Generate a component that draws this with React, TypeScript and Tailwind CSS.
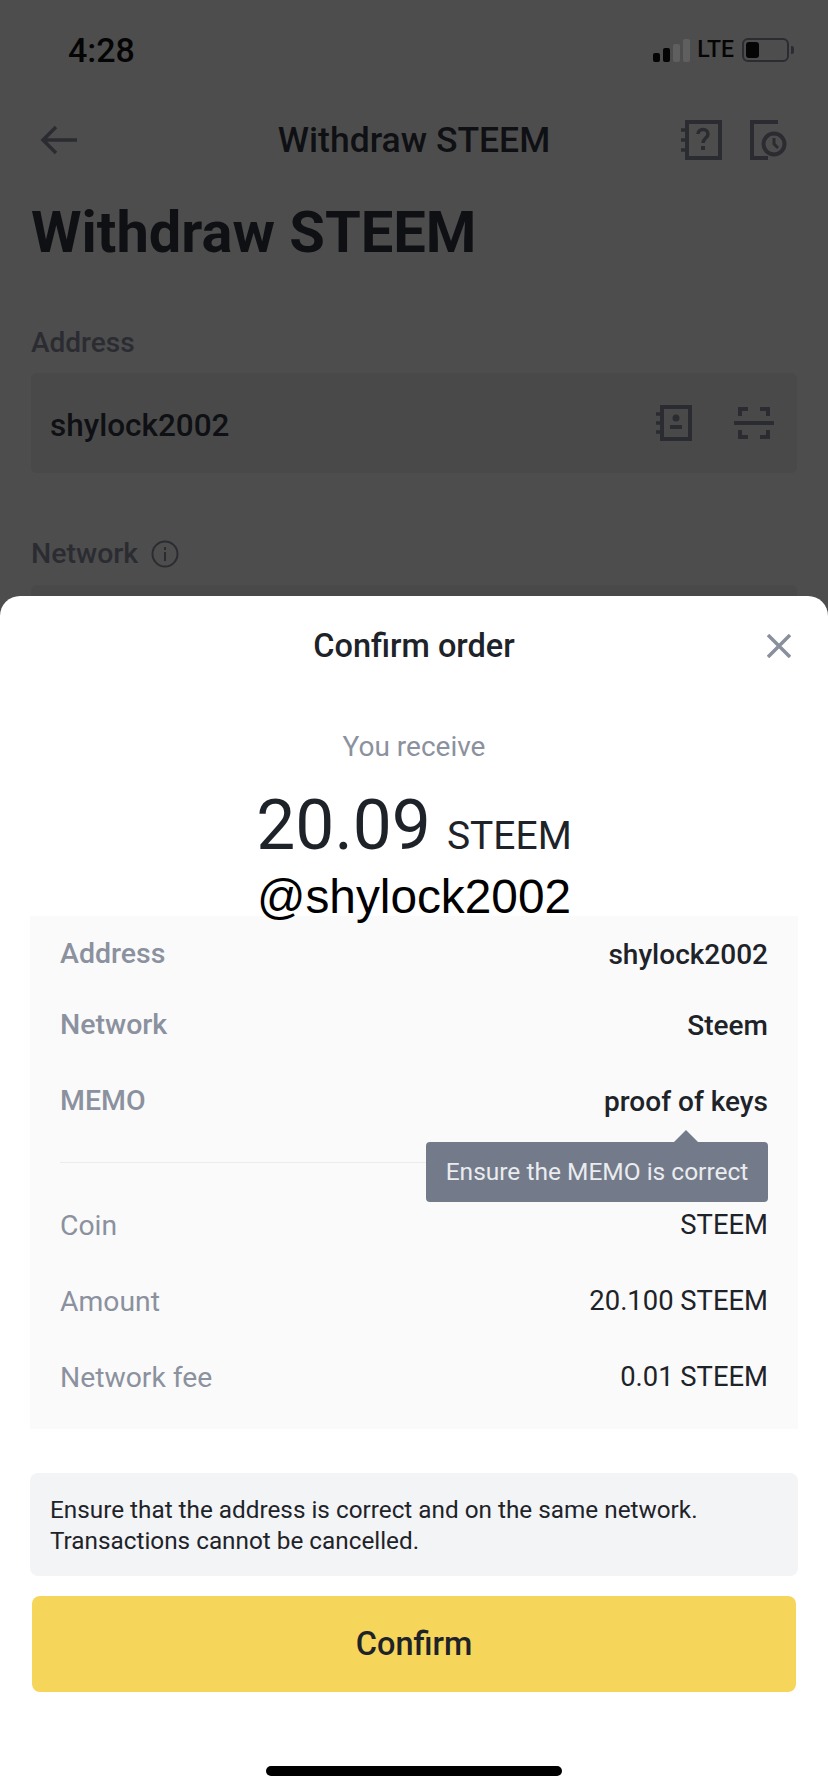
const sans = { fontFamily: "Roboto, 'Noto Sans', sans-serif" };

const details = [
  { label: "Address", value: "shylock2002", h: "h-[74px]" },
  { label: "Network", value: "Steem", h: "h-[68px]" },
  { label: "MEMO", value: "proof of keys", h: "h-[84px]" },
];

const amounts = [
  { label: "Coin", value: "STEEM" },
  { label: "Amount", value: "20.100 STEEM" },
  { label: "Network fee", value: "0.01 STEEM" },
];

const BookQuestionIcon = () => (
  <svg width="42" height="40" viewBox="0 0 42 40" fill="none" stroke="#2b2c31" strokeWidth="4">
    <path d="M6 2h33v36H6z" />
    <path d="M0 10h6M0 20h6M0 30h6" strokeWidth="3.5" />
    <path d="M17 14c0-6 10-6 10 0 0 4-5 4-5 9" strokeWidth="3.5" />
    <path d="M22 26v4" strokeWidth="4" />
  </svg>
);

const HistoryIcon = () => (
  <svg width="38" height="40" viewBox="0 0 38 40" fill="none" stroke="#2b2c31" strokeWidth="4">
    <path d="M28 2H2v36h16" />
    <circle cx="24" cy="24" r="10.5" />
    <path d="M24 18v6l4 4" strokeWidth="3" />
  </svg>
);

const ContactBookIcon = () => (
  <svg width="36" height="36" viewBox="0 0 36 36" fill="none" stroke="#2b2c31" strokeWidth="4">
    <path d="M6 2h28v32H6z" />
    <path d="M0 9h6M0 18h6M0 27h6" strokeWidth="3.5" />
    <circle cx="20" cy="13" r="3.5" fill="#2b2c31" stroke="none" />
    <path d="M14 22h12" />
  </svg>
);

const ScanIcon = () => (
  <svg width="40" height="32" viewBox="0 0 40 32" fill="none" stroke="#2b2c31" strokeWidth="4">
    <path d="M0 16h40" />
    <path d="M6 9V2h8M26 2h8v7M6 23v7h8M26 30h8v-7" />
  </svg>
);

export default function App() {
  return (
    <div className="relative h-[1792px] w-[828px] overflow-hidden bg-[#4d4d4d]" style={sans}>
      {/* Status bar */}
      <div className="flex h-[100px] items-center justify-between pl-[68px] pr-[34px]">
        <span className="text-[34px] font-medium text-[#050505]">4:28</span>
        <div className="flex items-center">
          <div className="flex items-end gap-[3px]">
            <span className="h-[9px] w-[7px] rounded-[2px] bg-[#050505]" />
            <span className="h-[14px] w-[7px] rounded-[2px] bg-[#050505]" />
            <span className="h-[18px] w-[7px] rounded-[2px] bg-[#5f5f5f]" />
            <span className="h-[23px] w-[7px] rounded-[2px] bg-[#5f5f5f]" />
          </div>
          <span className="ml-[7px] text-[23px] font-medium text-[#050505]">LTE</span>
          <div className="ml-[8px] flex h-[24px] w-[47px] items-center rounded-[6px] border-2 border-[#2b2c31] px-[2px]">
            <span className="h-[16px] w-[13px] rounded-[3px] bg-[#050505]" />
          </div>
          <span className="ml-[2px] h-[8px] w-[3px] rounded-r-[2px] bg-[#2b2c31]" />
        </div>
      </div>

      {/* Nav bar */}
      <div className="mt-[20px] grid h-[40px] grid-cols-[1fr_auto_1fr] items-center px-[40px]">
        <svg width="38" height="30" viewBox="0 0 38 30" fill="none" stroke="#2b2c31" strokeWidth="3.5">
          <path d="M37 15H3M16 2L3 15l13 13" />
        </svg>
        <span className="text-[35.5px] font-medium leading-[40px] text-[#0f1014]">Withdraw STEEM</span>
        <div className="flex items-center justify-end gap-[27px]">
          <BookQuestionIcon />
          <HistoryIcon />
        </div>
      </div>

      <h1 className="mt-[40px] pl-[31px] text-[57.8px] font-bold leading-[64px] text-[#0f1014]">Withdraw STEEM</h1>

      <p className="mt-[61px] pl-[31px] text-[28px] font-medium leading-[36px] text-[#2b2c31]">Address</p>
      <div className="mx-[31px] mt-[12px] flex h-[100px] items-center justify-between rounded-[6px] bg-[#494949] pl-[19px] pr-[23px]">
        <span className="mt-[5px] text-[31.5px] font-medium text-[#0f1014]">shylock2002</span>
        <div className="flex items-center gap-[42px]">
          <ContactBookIcon />
          <ScanIcon />
        </div>
      </div>

      <div className="mt-[63px] flex items-center gap-[13px] pl-[31px]">
        <span className="text-[28.5px] font-medium leading-[36px] text-[#2b2c31]">Network</span>
        <svg width="28" height="28" viewBox="0 0 28 28" fill="none" stroke="#2b2c31" strokeWidth="2">
          <circle cx="14" cy="14" r="12.5" />
          <path d="M14 12v9M14 7v3" />
        </svg>
      </div>
      {/* Network field, mostly hidden behind the sheet */}
      <div className="mx-[31px] mt-[13px] h-[100px] rounded-[6px] bg-[#494949]" />

      {/* Bottom sheet */}
      <div className="absolute inset-x-0 bottom-0 flex h-[1196px] flex-col rounded-t-[20px] bg-white">
        <div className="relative flex h-[101px] items-center justify-center">
          <span className="text-[32.5px] font-medium text-[#1e2329]">Confirm order</span>
          <svg className="absolute right-[37px] top-[38px]" width="24" height="24" viewBox="0 0 24 24" fill="none" stroke="#8a8f9c" strokeWidth="3.5">
            <path d="M1 1l22 22M23 1L1 23" />
          </svg>
        </div>

        <p className="mt-[32px] text-center text-[28px] leading-[36px] text-[#8b919e]">You receive</p>

        <div className="mt-[19px] flex items-baseline justify-center gap-[16px] text-[#1e2329]">
          <span className="text-[69.5px] font-normal leading-[84px]">20.09</span>
          <span className="text-[39px] font-normal leading-[44px]">STEEM</span>
        </div>

        <p className="relative z-10 mt-[10px] text-center text-[47.8px] leading-[38px] text-black" style={{ fontFamily: "'Liberation Sans', sans-serif" }}>
          @shylock2002
        </p>

        <div className="relative mx-[30px] h-[513px] bg-[#fafafa] px-[30px]">
          {details.map((row) => (
            <div key={row.label} className={`flex items-center justify-between pt-[3px] ${row.h}`}>
              <span className="text-[28.5px] font-medium text-[#8b919e]">{row.label}</span>
              <span className="text-[28px] font-medium text-[#1e2329]">{row.value}</span>
            </div>
          ))}
          <div className="mt-[20px] h-px bg-[#eaecef]" />
          <div className="mt-[23px]">
            {amounts.map((row) => (
              <div key={row.label} className="flex h-[76px] items-center justify-between pt-[4px]">
                <span className="text-[28.3px] text-[#8b919e]">{row.label}</span>
                <span className="text-[27.4px] text-[#1e2329]">{row.value}</span>
              </div>
            ))}
          </div>

          {/* Tooltip */}
          <div className="absolute right-[30px] top-[226px] flex h-[60px] w-[342px] items-center justify-center rounded-[4px] bg-[#737a8a] text-[24.5px] text-[#eaecef]">
            <span className="absolute right-[70px] top-[-12px] h-0 w-0 border-x-[12px] border-b-[12px] border-x-transparent border-b-[#737a8a]" />
            Ensure the MEMO is correct
          </div>
        </div>

        <div className="mx-[30px] mt-[44px] flex h-[103px] flex-col justify-center rounded-[8px] bg-[#f3f4f6] px-[20px] text-[24.3px] leading-[31px] text-[#1e2329]">
          <p>Ensure that the address is correct and on the same network.</p>
          <p>Transactions cannot be cancelled.</p>
        </div>

        <button className="mx-[32px] mt-[20px] flex h-[96px] items-center justify-center rounded-[8px] bg-[#f5d55a] text-[32.5px] font-medium text-[#1e2329]">
          Confirm
        </button>

        <div className="mx-auto mt-[74px] h-[10px] w-[296px] rounded-full bg-black" />
      </div>
    </div>
  );
}
